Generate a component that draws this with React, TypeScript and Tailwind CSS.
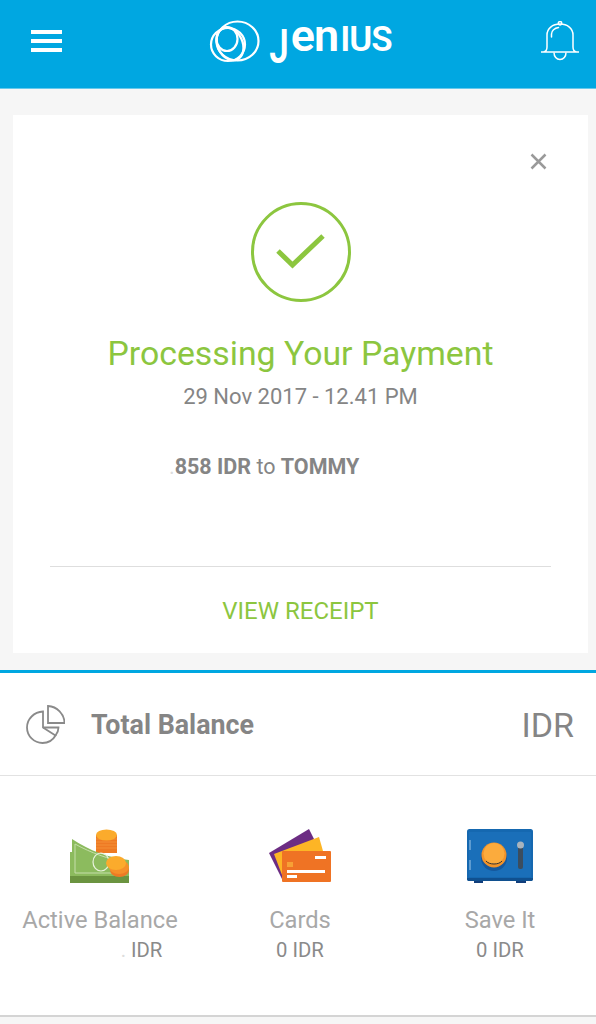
import React from "react";

const JeniusRings = () => (
    <svg width="49" height="41" viewBox="0 0 49 41" fill="none" stroke="white" strokeWidth="2.200" className="overflow-visible">
        <ellipse cx="27.500" cy="20" rx="21" ry="19.500" />
        <ellipse cx="18" cy="23.500" rx="17" ry="16.500" />
        <ellipse cx="20" cy="23" rx="12.500" ry="17" transform="rotate(-25 20 23)" />
        <ellipse cx="17" cy="18" rx="10.500" ry="12" />
    </svg>
);

const BellIcon = () => (
    <svg width="40" height="40" viewBox="0 0 40 40" fill="none" stroke="white" strokeWidth="1.500">
        <path d="M1 31h38M3.500 31c2.500-.5 3.500-2 3.500-5V14C7 7.500 12.500 3 20 3s13 4.500 13 11v12c0 3 1 4.500 3.500 5" />
        <circle cx="20" cy="2.200" r="1.700" />
        <path d="M14 31.500c0 4 2.500 7 6 7s6-3 6-7" />
        <path d="M11.500 16v-3c0-3 3-6 7-6.500" strokeLinecap="round" />
    </svg>
);

const PieIcon = () => (
    <svg width="40" height="40" viewBox="0 0 40 40" fill="none" stroke="#8a8a8a" strokeWidth="1.800">
        <path d="M18 7.500C9 8 2 15 2 23.500 2 32 9 39 17.500 39c5.500 0 10.500-3 13-7.500L18 23.500z" />
        <path d="M18 23.500h15.500c0 3-1 5.500-3 8" />
        <path d="M23 2v17h16.500C39.500 10 32 2.500 23 2z" />
    </svg>
);

const MoneyIcon = () => (
    <svg width="60" height="54" viewBox="0 0 60 54">
        <path d="M26 6h21v18H26z" fill="#ee7a24" />
        <path d="M26 10h21M26 13h21M26 16h21M26 19h21" stroke="#f5983c" strokeWidth=".8" />
        <ellipse cx="36.500" cy="6" rx="10.500" ry="5.500" fill="#fbab2c" />
        <path d="M0 23h2V10C20 22 40 29 59 31v23H0z" fill="#8cbb5e" />
        <path d="M0 47h59v7H0z" fill="#6b9440" />
        <path d="M5 15c16 9 34 15 50 18.500V44H5z" fill="none" stroke="#c5deaa" strokeWidth="1" />
        <ellipse cx="31" cy="33" rx="8" ry="9" fill="none" stroke="#e8f2dc" strokeWidth="1.200" />
        <ellipse cx="49.500" cy="41" rx="9.500" ry="7" fill="#ee7a24" />
        <ellipse cx="49" cy="38" rx="10" ry="7" fill="#f5902a" />
        <ellipse cx="46" cy="34" rx="10" ry="7" fill="#fbab2c" />
    </svg>
);

const CardsIcon = () => (
    <svg width="64" height="54" viewBox="0 0 64 54">
        <path d="M1 24 41 0l5 10-32 40z" fill="#6c2d83" />
        <path d="M6 25 51 8l4 14-41 24z" fill="#fdb525" />
        <rect x="14" y="22" width="49" height="31" rx="1" fill="#ef7324" />
        <rect x="47" y="27" width="11" height="3" fill="#ffffff" />
        <rect x="19" y="33" width="6" height="5" fill="#f7a135" />
        <rect x="19" y="41" width="38" height="3" fill="#ffffff" />
        <rect x="19" y="46" width="10" height="3" fill="#ffffff" />
    </svg>
);

const SafeIcon = () => (
    <svg width="66" height="54" viewBox="0 0 66 54">
        <rect x="7" y="50" width="9" height="4" fill="#123f7c" />
        <rect x="49" y="50" width="10" height="4" fill="#123f7c" />
        <rect x="0" y="0" width="66" height="52" rx="2.500" fill="#1568b0" />
        <path d="M0 49h66v1c0 1.500-1 2-2.500 2h-61C1 52 0 51.500 0 50z" fill="#10508f" />
        <rect x="2" y="3" width="62" height="45" fill="#1a6fb9" />
        <rect x="2" y="11" width="2" height="10" fill="#5d9bd0" />
        <rect x="2" y="31" width="2" height="10" fill="#5d9bd0" />
        <circle cx="27" cy="29" r="13" fill="#15589c" />
        <circle cx="27" cy="26" r="12.500" fill="#f1932a" />
        <circle cx="27" cy="24.500" r="10.500" fill="#fbab3d" />
        <path d="M19 32c3 4 13 4 16 0" fill="none" stroke="#333333" strokeWidth="1" />
        <rect x="51" y="15" width="5" height="25" rx="2" fill="#3c4d5e" />
        <circle cx="53.500" cy="16" r="3.500" fill="#a9b4bd" />
    </svg>
);

const BalanceTile = ({
    icon,
    label,
    amount,
    amountClass = "",
}: {
    icon: React.ReactNode;
    label: string;
    amount: React.ReactNode;
    amountClass?: string;
}) => (
    <div className="flex flex-col items-center">
        <div className="h-[54px] flex items-center justify-center">{icon}</div>
        <div className="mt-[23px] text-[23.700px] leading-[28px] text-[#a8a8a8] whitespace-nowrap">{label}</div>
        <div className={`mt-[3px] text-[20.300px] leading-[26px] text-[#8a8a8a] whitespace-nowrap ${amountClass}`}>
            {amount}
        </div>
    </div>
);

export default function App() {
    return (
        <div className="w-[596px] h-[1024px] overflow-hidden bg-[#f6f6f6] font-['Roboto',sans-serif]">
            <header className="h-[89px] bg-[#00a7e1] border-b border-[#66c9ec] flex items-center justify-between pl-[31px] pr-[16px]">
                <div className="flex flex-col gap-[5px] -mt-[6px]">
                    <div className="w-[31px] h-[4px] bg-white" />
                    <div className="w-[31px] h-[4px] bg-white" />
                    <div className="w-[31px] h-[4px] bg-white" />
                </div>
                <div className="flex items-center gap-[10px] -mt-[6px]">
                    <JeniusRings />
                    <div className="flex items-baseline text-white font-semibold text-[35px] leading-[40px] -mt-[6px] tracking-[-1px]">
                        <span className="inline-block origin-top scale-y-[1.4] mr-[3px]">J</span>
                        <span className="text-[45px] leading-[40px] mr-[2px]">en</span>
                        <span>IUS</span>
                    </div>
                </div>
                <div className="-mt-[6px]">
                    <BellIcon />
                </div>
            </header>

            <main className="pt-[26px] pl-[13px] pr-[8px]">
                <section className="relative h-[538px] bg-white flex flex-col items-center pt-[87px]">
                    <button className="absolute top-[38px] right-[41px] text-[#9a9a9a]">
                        <svg width="17" height="17" viewBox="0 0 17 17" stroke="currentColor" strokeWidth="2.500">
                            <path d="M1.500 1.500l14 14M15.500 1.500l-14 14" />
                        </svg>
                    </button>
                    <div className="w-[100px] h-[100px] rounded-full border-[3px] border-[#8cc63f] flex items-center justify-center">
                        <svg width="50" height="38" viewBox="0 0 50 38" fill="none" stroke="#8cc63f" strokeWidth="5">
                            <path d="M2 18l14.500 14L47 3" />
                        </svg>
                    </div>
                    <h1 className="mt-[30px] text-[33.800px] leading-[44px] text-[#8cc63f]">Processing Your Payment</h1>
                    <p className="mt-[6px] text-[22px] leading-[30px] text-[#858585]">29 Nov 2017 - 12.41 PM</p>
                    <p className="mt-[41px] self-start pl-[156px] text-[21.500px] leading-[28px] text-[#858585]">
                        <span className="text-[#dddddd]">.</span>
                        <span className="font-bold">858 IDR</span> to <span className="font-bold">TOMMY</span>
                    </p>
                    <div className="mt-[85px] w-[501px] self-start ml-[37px] border-t border-[#dedede]" />
                    <button className="mt-[29px] text-[24px] leading-[30px] text-[#8cc63f]">VIEW RECEIPT</button>
                </section>
            </main>

            <section className="mt-[17px] h-[345px] bg-white border-t-[3px] border-[#00a7e1]">
                <div className="h-[103px] border-b border-[#e2e2e2] flex items-center pl-[25px] pr-[22px]">
                    <PieIcon />
                    <span className="ml-[26px] mt-[3px] text-[26.800px] font-bold text-[#858585]">Total Balance</span>
                    <span className="ml-auto mt-[2px] text-[34px] text-[#858585]">IDR</span>
                </div>
                <div className="grid grid-cols-[200px_200px_200px] pt-[53px]">
                    <BalanceTile
                        icon={<MoneyIcon />}
                        label="Active Balance"
                        amount={
                            <>
                                <span className="text-[#dddddd]">.</span> IDR
                            </>
                        }
                        amountClass="pl-[83px]"
                    />
                    <BalanceTile icon={<CardsIcon />} label="Cards" amount="0 IDR" />
                    <BalanceTile icon={<SafeIcon />} label="Save It" amount="0 IDR" />
                </div>
            </section>
            <div className="border-t-2 border-[#d4d4d4]" />
        </div>
    );
}
